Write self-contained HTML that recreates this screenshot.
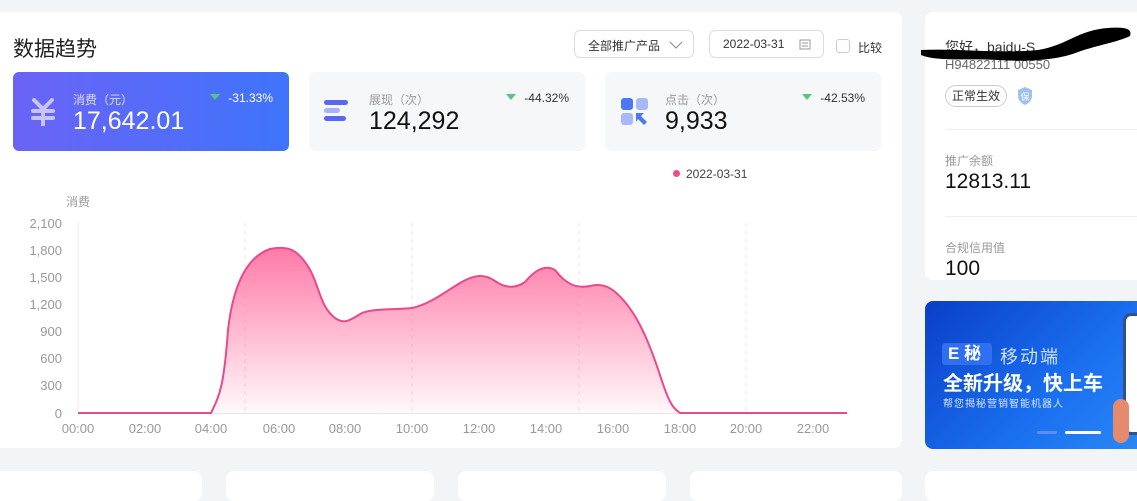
<!DOCTYPE html>
<html><head><meta charset="utf-8"><style>
*{margin:0;padding:0;box-sizing:border-box}
body{width:1137px;height:482px;overflow:hidden;background:#f3f4f6;font-family:"Liberation Sans","Noto Sans CJK SC",sans-serif;position:relative}
.abs{position:absolute}
.panel{background:#fff;border-radius:8px}
.card{position:absolute;top:72px;height:79px;width:276px;border-radius:6px;background:#f6f7f8}
.lbl{position:absolute;left:60px;top:19px;font-size:12px;color:#999}
.val{position:absolute;left:60px;top:35px;font-size:25px;color:#111}
.pct{position:absolute;right:16px;top:19px;font-size:12px;color:#333}
.tri{display:inline-block;width:0;height:0;border-left:5px solid transparent;border-right:5px solid transparent;border-top:6px solid #5ac47d;margin-right:8px;vertical-align:2px}
</style></head><body>
<div class="abs panel" style="left:-10px;top:12px;width:912px;height:436px"></div>
<div class="abs" style="left:13px;top:33px;font-size:21px;color:#222">数据趋势</div>
<div class="abs" style="left:574px;top:30px;width:120px;height:28px;border:1px solid #ddd;border-radius:6px;font-size:12px;color:#333;padding:6px 0 0 13px">全部推广产品 <svg width="14" height="10" style="margin-left:6px"><path d="M1 2l6 6 6-6" stroke="#888" fill="none"/></svg></div>
<div class="abs" style="left:709px;top:30px;width:115px;height:28px;border:1px solid #ddd;border-radius:6px;font-size:12px;color:#333;padding:6px 0 0 13px">2022-03-31<svg width="12" height="12" style="position:absolute;right:12px;top:7px"><rect x="1" y="2" width="10" height="9" fill="none" stroke="#999"/><path d="M3 5h6M3 8h6" stroke="#999"/></svg></div>
<div class="abs" style="left:836px;top:39px;width:14px;height:14px;border:1px solid #ccc;border-radius:3px"></div>
<div class="abs" style="left:858px;top:39px;font-size:12px;color:#333">比较</div>

<div class="card" style="left:13px;background:linear-gradient(90deg,#6b63f6,#3f74fb)">
<svg class="abs" style="left:17px;top:26px" width="26" height="28"><path d="M4 2l9 9 9-9" stroke="#c7c4fd" stroke-width="4" fill="none" stroke-linecap="round"/><path d="M3 13h20M3 20h20M13 11v16" stroke="#c7c4fd" stroke-width="4" stroke-linecap="round"/></svg>
<div class="lbl" style="color:#dde">消费（元）</div><div class="val" style="color:#fff">17,642.01</div>
<div class="pct" style="color:#fff"><span class="tri"></span>-31.33%</div></div>

<div class="card" style="left:309px">
<svg class="abs" style="left:14px;top:27px" width="26" height="24"><rect x="1" y="1" width="24" height="5" rx="2.5" fill="#5a67f0"/><rect x="1" y="9" width="16" height="5" rx="2.5" fill="#a9b2fa"/><rect x="1" y="17" width="22" height="5" rx="2.5" fill="#5a67f0"/></svg>
<div class="lbl">展现（次）</div><div class="val">124,292</div>
<div class="pct"><span class="tri"></span>-44.32%</div></div>

<div class="card" style="left:605px">
<svg class="abs" style="left:16px;top:26px" width="28" height="28"><rect x="0" y="0" width="12" height="12" rx="3" fill="#4e78f3"/><rect x="15" y="0" width="12" height="12" rx="3" fill="#a7b8fb"/><rect x="0" y="15" width="12" height="12" rx="3" fill="#a7b8fb"/><path d="M15 15h8l-3 3 6 6-3 3-6-6-2 3z" fill="#4e78f3"/></svg>
<div class="lbl">点击（次）</div><div class="val">9,933</div>
<div class="pct"><span class="tri"></span>-42.53%</div></div>

<div class="abs" style="left:673px;top:170px;width:7px;height:7px;border-radius:50%;background:#ec4c8d"></div>
<div class="abs" style="left:686px;top:167px;font-size:12px;color:#444">2022-03-31</div>

<svg class="abs" style="left:0;top:190px" width="902" height="250">
<defs><linearGradient id="g" x1="0" y1="0" x2="0" y2="1"><stop offset="0" stop-color="#ff7aa8"/><stop offset="1" stop-color="#ff7aa8" stop-opacity="0.05"/></linearGradient></defs>
<text x="66" y="16" font-size="12" fill="#999">消费</text>
<g font-size="13" fill="#999" text-anchor="end" font-family="Liberation Sans">
<text x="62" y="38">2,100</text><text x="62" y="65">1,800</text><text x="62" y="92">1,500</text><text x="62" y="119">1,200</text><text x="62" y="146">900</text><text x="62" y="173">600</text><text x="62" y="200">300</text><text x="62" y="228">0</text></g>
<line x1="78" y1="33" x2="78" y2="223" stroke="#eee"/>
<line x1="78" y1="223.5" x2="847" y2="223.5" stroke="#e6e6e6"/>
<g stroke="#e6e6e6" stroke-dasharray="4 4"><line x1="245" y1="33" x2="245" y2="223"/><line x1="412" y1="33" x2="412" y2="223"/><line x1="579" y1="33" x2="579" y2="223"/><line x1="746" y1="33" x2="746" y2="223"/></g>
<g font-size="13" fill="#999" text-anchor="middle" font-family="Liberation Sans">
<text x="78" y="243">00:00</text><text x="145" y="243">02:00</text><text x="211" y="243">04:00</text><text x="279" y="243">06:00</text><text x="345" y="243">08:00</text><text x="412" y="243">10:00</text><text x="479" y="243">12:00</text><text x="546" y="243">14:00</text><text x="613" y="243">16:00</text><text x="680" y="243">18:00</text><text x="746" y="243">20:00</text><text x="813" y="243">22:00</text></g>
<path d="M78 223 L211 223 C220 205 224 195 228 140 C234 88 250 66 270 59 C285 56 295 58 305 72 C320 92 318 115 335 128 C345 135 350 130 362 123 C375 118 395 120 412 118 C430 114 445 102 460 93 C475 84 485 84 495 91 C505 98 515 99 525 92 C535 80 545 74 555 80 C565 93 575 99 590 96 C605 92 615 100 625 112 C640 130 650 155 660 185 C668 210 672 218 680 223 Z" fill="url(#g)"/>
<path d="M78 223 L211 223 C220 205 224 195 228 140 C234 88 250 66 270 59 C285 56 295 58 305 72 C320 92 318 115 335 128 C345 135 350 130 362 123 C375 118 395 120 412 118 C430 114 445 102 460 93 C475 84 485 84 495 91 C505 98 515 99 525 92 C535 80 545 74 555 80 C565 93 575 99 590 96 C605 92 615 100 625 112 C640 130 650 155 660 185 C668 210 672 218 680 223 L847 223" fill="none" stroke="#e84a8a" stroke-width="2"/>
</svg>

<div class="abs panel" style="left:925px;top:12px;width:220px;height:268px"></div>
<div class="abs" style="left:945px;top:37px;font-size:14px;color:#333">您好，baidu-S</div>
<div class="abs" style="left:945px;top:57px;font-size:13px;color:#666">H94822111 00550</div>
<svg class="abs" style="left:918px;top:20px" width="219" height="50"><path d="M3 30 C40 28 80 34 120 30 C150 25 160 10 190 8 C205 7 215 8 212 16 C200 22 180 25 160 32 C140 40 110 42 80 40 C50 38 20 42 3 35Z" fill="#000"/></svg>
<div class="abs" style="left:945px;top:85px;width:62px;height:22px;border:1px solid #ccc;border-radius:11px;font-size:12px;color:#333;text-align:center;line-height:20px">正常生效</div>
<svg class="abs" style="left:1016px;top:86px" width="18" height="20"><path d="M9 1l7 3v6c0 4-3 7-7 9-4-2-7-5-7-9V4z" fill="#9ec0f3"/><text x="9" y="14" font-size="9" fill="#fff" text-anchor="middle">保</text></svg>
<div class="abs" style="left:945px;top:129px;width:192px;height:1px;background:#eee"></div>
<div class="abs" style="left:945px;top:152px;font-size:12px;color:#999">推广余额</div>
<div class="abs" style="left:945px;top:170px;font-size:21px;color:#111">12813.11</div>
<div class="abs" style="left:945px;top:216px;width:192px;height:1px;background:#eee"></div>
<div class="abs" style="left:945px;top:239px;font-size:12px;color:#999">合规信用值</div>
<div class="abs" style="left:945px;top:257px;font-size:21px;color:#111">100</div>

<div class="abs" style="left:925px;top:301px;width:220px;height:148px;border-radius:8px;background:linear-gradient(135deg,#0a3fc8,#1a6ff0 60%,#2a88f6);overflow:hidden">
<div class="abs" style="left:17px;top:42px;width:50px;height:22px;background:#2f6ff0;border-radius:3px;color:#fff;font-size:17px;font-weight:bold;padding-left:6px;line-height:22px">E 秘</div>
<div class="abs" style="left:75px;top:42px;color:#cfe0ff;font-size:18px;letter-spacing:2px">移动端</div>
<div class="abs" style="left:18px;top:66px;color:#fff;font-size:20px;font-weight:bold">全新升级，快上车</div>
<div class="abs" style="left:18px;top:94px;color:#d6e4ff;font-size:10px;letter-spacing:1px">帮您揭秘营销智能机器人</div>
<div class="abs" style="left:198px;top:12px;width:30px;height:122px;border-radius:8px;background:#fff;border:3px solid #34508a"></div>
<div class="abs" style="left:188px;top:98px;width:16px;height:44px;border-radius:8px;background:#e58a6c"></div>
<div class="abs" style="left:112px;top:130px;width:20px;height:3px;background:#5d8ff0;border-radius:2px"></div>
<div class="abs" style="left:140px;top:130px;width:36px;height:3px;background:#fff;border-radius:2px"></div>
</div>

<div class="abs panel" style="left:-10px;top:471px;width:212px;height:30px"></div>
<div class="abs panel" style="left:226px;top:471px;width:208px;height:30px"></div>
<div class="abs panel" style="left:458px;top:471px;width:208px;height:30px"></div>
<div class="abs panel" style="left:690px;top:471px;width:212px;height:30px"></div>
<div class="abs panel" style="left:925px;top:471px;width:220px;height:30px"></div>
</body></html>
